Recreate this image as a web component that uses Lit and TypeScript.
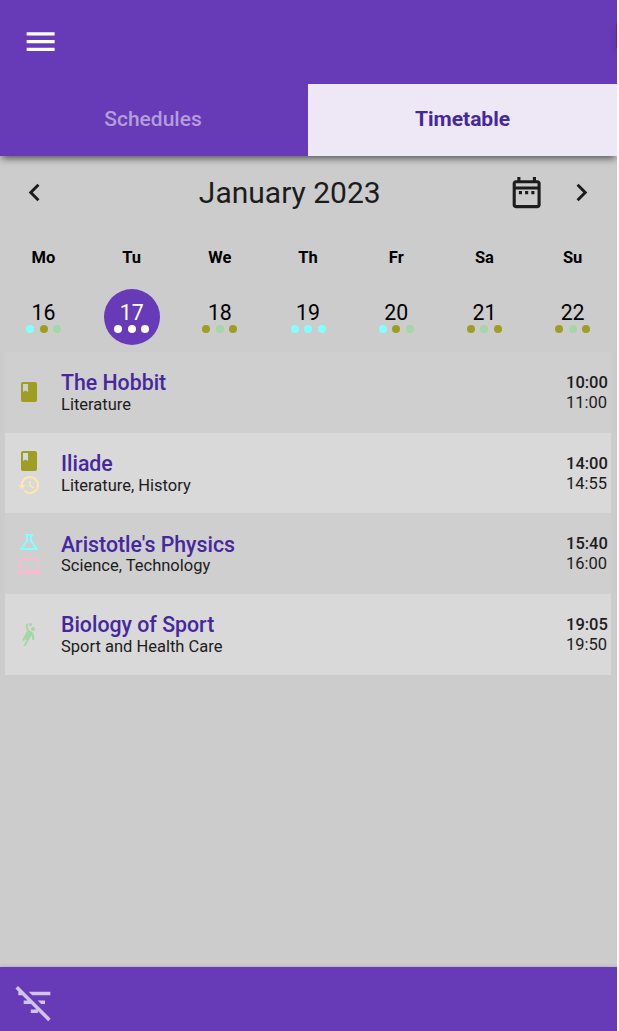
import { LitElement, html, css } from "lit";
import { customElement, state } from "lit/decorators.js";

const ICONS: Record<string, string> = {
  menu: "M3 18h18v-2H3v2zm0-5h18v-2H3v2zm0-7v2h18V6H3z",
  left: "M15.41 7.41 14 6l-6 6 6 6 1.41-1.41L10.83 12z",
  right: "M10 6 8.59 7.41 13.17 12l-4.58 4.59L10 18l6-6z",
  calendar:
    "M7 11h2v2H7v-2zm14-5v14c0 1.1-.9 2-2 2H5c-1.11 0-2-.9-2-2l.01-14c0-1.1.88-2 1.99-2h1V2h2v2h8V2h2v2h1c1.1 0 2 .9 2 2zM5 8h14V6H5v2zm14 12V10H5v10h14zm-4-7h2v-2h-2v2zm-4 0h2v-2h-2v2z",
  book: "M18 2H6c-1.1 0-2 .9-2 2v16c0 1.1.9 2 2 2h12c1.1 0 2-.9 2-2V4c0-1.1-.9-2-2-2zM6 4h5v8l-2.5-1.5L6 12V4z",
  history:
    "M13 3c-4.97 0-9 4.03-9 9H1l3.89 3.89.07.14L9 12H6c0-3.87 3.13-7 7-7s7 3.13 7 7-3.13 7-7 7c-1.93 0-3.68-.79-4.94-2.06l-1.42 1.42C8.27 19.99 10.51 21 13 21c4.97 0 9-4.03 9-9s-4.03-9-9-9zm-1 5v5l4.28 2.54.72-1.21-3.5-2.08V8H12z",
  science:
    "M13 11.33 18 18H6l5-6.67V6h2m2.96-2H8.04c-.42 0-.65.48-.39.81L9 6.5v4.17L3.2 18.4c-.49.66-.02 1.6.8 1.6h16c.82 0 1.29-.94.8-1.6L15 10.67V6.5l1.35-1.69c.26-.33.03-.81-.39-.81z",
  laptop:
    "M20 18c1.1 0 1.99-.9 1.99-2L22 6c0-1.1-.9-2-2-2H4c-1.1 0-2 .9-2 2v10c0 1.1.9 2 2 2H0v2h24v-2h-4zM4 6h16v10H4V6z",
  sport:
    "M14.27 6c-.55.95-.22 2.18.73 2.73.95.55 2.18.22 2.73-.73s.22-2.18-.73-2.73-2.18-.22-2.73.73zM15.84 10.41s-1.63-.94-2.6-1.5c-2.38-1.38-3.2-4.44-1.82-6.82l-1.73-1c-1.48 2.56-1.17 5.68.54 7.87l-5.23 9.06 1.73 1 1-1.73 1.73 1-3 5.2 1.73 1 6.29-10.89c.83 1.06.99 2.55.29 3.77l1.73 1c1.17-2.04 1.02-5.25-.66-7.96zM12.75 3.8c.72.41 1.63.17 2.05-.55.41-.72.17-1.63-.55-2.05-.72-.41-1.63-.17-2.05.55s-.17 1.64.55 2.05z",
  filterOff:
    "M10.83 8H21V6H8.83l2 2zm5 5H18v-2h-4.17l2 2zM14 16.83V18h-4v-2h3.17l-3-3H6v-2h2.17l-3-3H3V6h.17L1.39 4.22 2.8 2.81l18.38 18.38-1.41 1.41L14 16.83z",
};

const icon = (name: string, cls = "") =>
  html`<svg class="icon ${cls}" viewBox="0 0 24 24" aria-hidden="true"><path d=${ICONS[name]}></path></svg>`;

const DAYS: [string, number, string[]][] = [
  ["Mo", 16, ["cyan", "olive", "green"]],
  ["Tu", 17, ["white", "white", "white"]],
  ["We", 18, ["olive", "green", "olive"]],
  ["Th", 19, ["cyan", "cyan", "cyan"]],
  ["Fr", 20, ["cyan", "olive", "green"]],
  ["Sa", 21, ["olive", "green", "olive"]],
  ["Su", 22, ["olive", "green", "olive"]],
];

const LESSONS = [
  { title: "The Hobbit", tags: "Literature", from: "10:00", to: "11:00", icons: [["book", "olive"]] },
  { title: "Iliade", tags: "Literature, History", from: "14:00", to: "14:55", icons: [["book", "olive"], ["history", "yellow"]] },
  { title: "Aristotle's Physics", tags: "Science, Technology", from: "15:40", to: "16:00", icons: [["science", "cyan"], ["laptop", "pink"]] },
  { title: "Biology of Sport", tags: "Sport and Health Care", from: "19:05", to: "19:50", icons: [["sport", "green"]] },
];

@customElement("app-root")
export class AppRoot extends LitElement {
  @state() private selected = 17;

  static styles = css`
    :host {
      display: flex;
      flex-direction: column;
      position: relative;
      box-sizing: border-box;
      width: 617px;
      height: 1031px;
      overflow: hidden;
      background: #ccc;
      color: #1c1c1c;
      font-family: Roboto, sans-serif;
    }
    .icon { display: block; width: 24px; height: 24px; fill: currentColor; flex: none; }
    .cyan { color: #84ffff; }
    .olive { color: #9e9d24; }
    .green { color: #a5d6a7; }
    .yellow { color: #ffe9a8; }
    .pink { color: #f8bbd0; }
    .white { color: #fff; }
    .top { background: #673ab7; box-shadow: 0 5px 6px -3px rgba(0, 0, 0, 0.4), 0 3px 8px rgba(0, 0, 0, 0.25); flex: none; }
    .bar { height: 84px; display: flex; align-items: center; padding-left: 22px; color: #fff; }
    .menu { width: 37.3px; height: 37.3px; }
    .corner {
      position: absolute; left: 616px; top: 23px; width: 9px; height: 25px;
      background: #a31545; box-shadow: 0 5px 10px -3px rgba(0, 0, 0, 0.35);
    }
    .tabs { display: grid; grid-template-columns: 308px 1fr; height: 72px; }
    .tab {
      display: flex; align-items: center; justify-content: center;
      font-size: 21px; font-weight: 500; color: #b39ddb; padding-bottom: 2px; padding-right: 2px;
    }
    .active { background: #ede7f6; color: #4527a0; font-weight: 700; padding-right: 0; }
    .month { display: grid; grid-template-columns: 52px 1fr 34px 36px; align-items: center; height: 73px; padding: 0 17.5px 0 17px; flex: none; }
    .chev { width: 35px; height: 35px; }
    .name { font-size: 30px; text-align: center; padding-right: 19px; }
    .date { width: 37.3px; height: 37.3px; margin-left: -21.4px; }
    .week { display: grid; grid-template-columns: repeat(7, 88.2px); margin-left: -0.6px; height: 123px; flex: none; }
    .day { display: flex; flex-direction: column; align-items: center; color: #000; }
    .dow { font-size: 16.5px; font-weight: 700; line-height: 20px; padding-top: 19px; }
    .num {
      box-sizing: border-box; width: 56px; height: 56px; margin-top: 20.8px; padding-top: 12px;
      border-radius: 50%; font-size: 21.3px; line-height: 24px;
      display: flex; flex-direction: column; align-items: center;
    }
    .on { background: #673ab7; color: #fff; }
    .dots { display: flex; gap: 5.5px; margin-top: 0.5px; }
    .dot { width: 8px; height: 8px; border-radius: 50%; background: currentColor; }
    .list { margin: 0 6px 0 5px; flex: 1; }
    .row { display: grid; grid-template-columns: 56px 1fr 45px; align-items: center; height: 80.7px; background: #cfcfcf; box-sizing: border-box; }
    .row:nth-child(even) { background: #d9d9d9; }
    .icons { padding-left: 12px; }
    .text { padding-top: 2.5px; }
    .title { font-size: 21.3px; font-weight: 500; line-height: 22.5px; color: #4527a0; }
    .sub, .time { font-size: 16.5px; line-height: 20px; }
    .times { padding-top: 1px; }
    .start { font-weight: 500; }
    .bottom { height: 64px; flex: none; background: #673ab7; color: #d1c4e9; padding: 14.2px 0 0 13.2px; box-sizing: border-box; box-shadow: 0 0 4px rgba(0, 0, 0, 0.2); }
    .filter { width: 42.7px; height: 42.7px; }
  `;

  render() {
    return html`
      <header class="top">
        <div class="bar">${icon("menu", "menu")}</div>
        <div class="corner"></div>
        <nav class="tabs">
          <div class="tab">Schedules</div>
          <div class="tab active">Timetable</div>
        </nav>
      </header>
      <div class="month">
        ${icon("left", "chev")}
        <div class="name">January 2023</div>
        ${icon("calendar", "date")} ${icon("right", "chev")}
      </div>
      <div class="week">
        ${DAYS.map(
          ([dow, num, dots]) => html`<div class="day" @click=${() => (this.selected = num)}>
            <div class="dow">${dow}</div>
            <div class="num ${this.selected === num ? "on" : ""}">
              ${num}
              <div class="dots">${dots.map((c) => html`<span class="dot ${c}"></span>`)}</div>
            </div>
          </div>`
        )}
      </div>
      <main class="list">
        ${LESSONS.map(
          (l) => html`<div class="row">
            <div class="icons">${l.icons.map(([n, c]) => icon(n, c))}</div>
            <div class="text"><div class="title">${l.title}</div><div class="sub">${l.tags}</div></div>
            <div class="times"><div class="time start">${l.from}</div><div class="time">${l.to}</div></div>
          </div>`
        )}
      </main>
      <footer class="bottom">${icon("filterOff", "filter")}</footer>
    `;
  }
}
